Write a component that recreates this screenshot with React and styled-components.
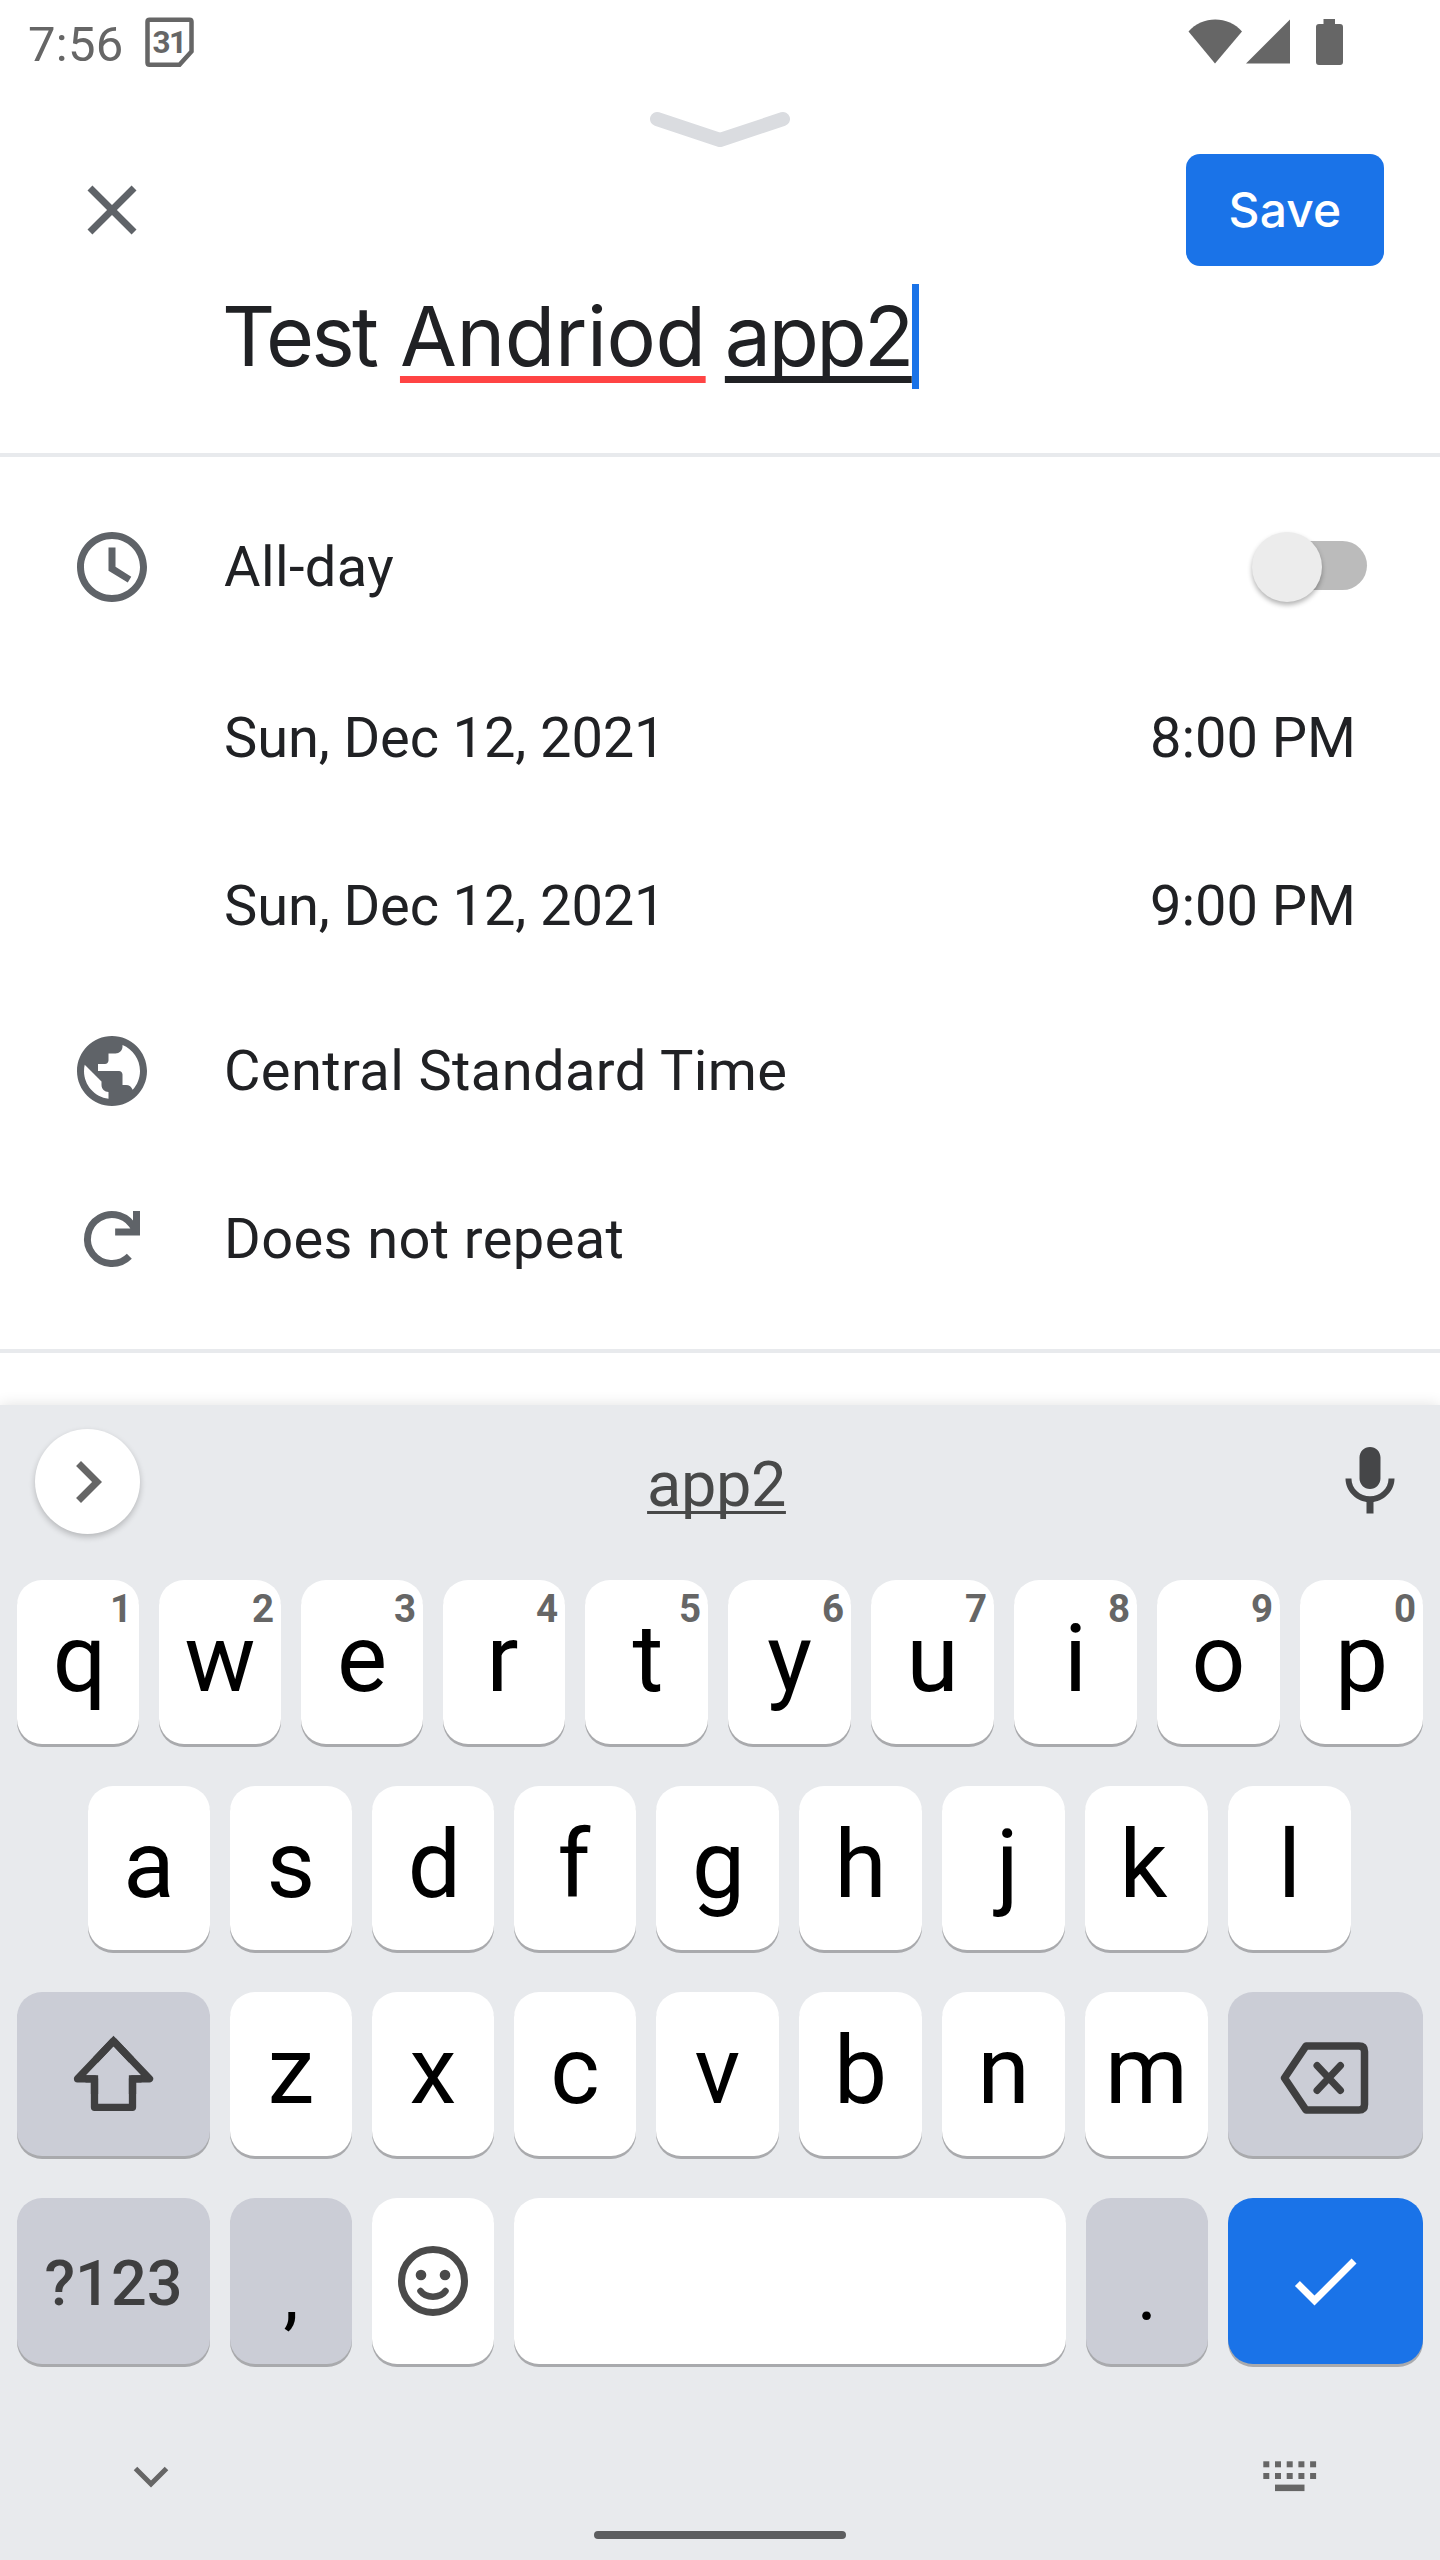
import React from "react";
import styled, { createGlobalStyle } from "styled-components";

const Global = createGlobalStyle`
  * { box-sizing: border-box; }
  body { margin: 0; background: #fff; }
  svg { display: block; flex: none; }
`;

const Screen = styled.main`
  width: 1440px;
  height: 2560px;
  display: flex;
  flex-direction: column;
  overflow: hidden;
  background: #fff;
  color: #202124;
  font-family: Roboto, "Liberation Sans", sans-serif;
`;

/* ---------- status bar ---------- */
const StatusBar = styled.header`
  height: 84px;
  display: flex;
  align-items: center;
  justify-content: space-between;
  padding: 0 97px 0 28px;
  color: #666;
`;
const StatusGroup = styled.div`
  display: flex;
  align-items: center;
  gap: ${(p) => p.$gap}px;
`;
const Clock = styled.span`
  font-size: 49px;
  line-height: 84px;
  padding-top: 5px;
  letter-spacing: 0.3px;
`;

/* ---------- event sheet header ---------- */
const SheetHeader = styled.section`
  height: 373px;
  display: flex;
  flex-direction: column;
  border-bottom: 4px solid #e8eaed;
`;
const Handle = styled.div`
  height: 70px;
  padding-top: 27px;
  display: flex;
  justify-content: center;
`;
const ActionBar = styled.div`
  height: 112px;
  display: flex;
  align-items: center;
  justify-content: space-between;
  padding: 0 56px 0 70px;
`;
const IconButton = styled.button`
  border: 0;
  padding: 0;
  background: none;
  color: ${(p) => p.$color || "#5f6368"};
`;
const SaveButton = styled.button`
  width: 198px;
  height: 112px;
  border: 0;
  border-radius: 14px;
  padding: 0;
  background: #1a73e8;
  color: #fff;
  font: 500 48px/112px Inter, Roboto, sans-serif;
  letter-spacing: 0.1px;
`;
const TitleField = styled.div`
  height: 105px;
  margin-top: 18px;
  padding-left: 222px;
  display: flex;
  font: 400 82.5px/105px Inter, Roboto, sans-serif;
  white-space: pre;
`;
const Word = styled.span`
  letter-spacing: ${(p) => p.$track || 0}px;
  text-decoration: ${(p) => (p.$line ? `underline ${p.$line}` : "none")};
  text-decoration-thickness: 7px;
  text-decoration-skip-ink: none;
  text-underline-offset: 10px;
`;
const Caret = styled.span`
  width: 7px;
  height: 105px;
  background: #1a73e8;
`;

/* ---------- event fields ---------- */
const Fields = styled.section`
  padding: 26px 0;
  border-bottom: 4px solid #e8eaed;
`;
const FieldRow = styled.div`
  height: ${(p) => p.$h || 168}px;
  display: flex;
  align-items: center;
  padding: 0 84px 0 70px;
  font-size: 56px;
  line-height: 66px;
`;
const FieldIcon = styled.span`
  width: 154px;
  flex: none;
  color: #5f6368;
`;
const FieldLabel = styled.span`
  flex: 1;
  letter-spacing: ${(p) => (p.$date ? -0.11 : 0.4)}px;
`;
const Switch = styled.span`
  width: 115px;
  height: 70px;
  margin-right: -11px;
  display: flex;
  align-items: center;
`;
const Thumb = styled.span`
  width: 70px;
  height: 70px;
  flex: none;
  border-radius: 50%;
  background: #ececec;
  box-shadow: 0 3px 5px rgba(0, 0, 0, 0.3);
  z-index: 1;
`;
const Track = styled.span`
  width: 101px;
  height: 49px;
  flex: none;
  margin: -3px 0 0 -56px;
  border-radius: 25px;
  background: #bbb;
`;
const Gap = styled.div`
  height: 52px;
`;

/* ---------- keyboard ---------- */
const Keyboard = styled.section`
  flex: 1;
  display: flex;
  flex-direction: column;
  background: #e8eaed;
  box-shadow: 0 0 14px rgba(0, 0, 0, 0.12);
`;
const SuggestionBar = styled.div`
  height: 153px;
  margin-bottom: 22px;
  display: flex;
  align-items: center;
  padding: 0 28px 0 35px;
`;
const Expand = styled.button`
  width: 105px;
  height: 105px;
  border: 0;
  border-radius: 50%;
  padding: 0 0 0 11px;
  background: #fff;
  color: #666;
  box-shadow: 0 3px 6px rgba(0, 0, 0, 0.22);
`;
const Suggestion = styled.span`
  flex: 1;
  padding: 6px 35px 0 0;
  text-align: center;
  font-size: 63px;
  letter-spacing: -0.4px;
  line-height: 74px;
  color: #484949;
  text-decoration: underline;
  text-decoration-thickness: 3px;
  text-decoration-skip-ink: none;
  text-underline-offset: 5px;
`;
const KeyRow = styled.div`
  height: 206px;
  display: flex;
  gap: 20px;
  padding-left: ${(p) => p.$inset || 17}px;
`;
const tones = {
  light: ["#fff", "#000"],
  dark: ["#cbcdd6", "#3f3f40"],
  punct: ["#cbcdd6", "#000"],
  blue: ["#1a73e8", "#fff"],
};
const KeyCap = styled.button`
  position: relative;
  width: ${(p) => p.$w}px;
  height: ${(p) => p.$h || 164}px;
  flex: none;
  border: 0;
  border-radius: 25px;
  padding: 0 ${(p) => Math.max(0, -(p.$nudge || 0)) * 2}px 0 ${(p) => Math.max(0, p.$nudge || 0) * 2}px;
  display: flex;
  justify-content: center;
  align-items: ${(p) => (p.$icon ? "center" : "flex-start")};
  background: ${(p) => tones[p.$tone || "light"][0]};
  color: ${(p) => tones[p.$tone || "light"][1]};
  box-shadow: 0 3px 0 #a9aaad;
  font-family: inherit;
  font-size: ${(p) => p.$size || 94.5}px;
  font-weight: ${(p) => p.$weight || 400};
  line-height: ${(p) => p.$line || 158}px;
`;
const Hint = styled.span`
  position: absolute;
  top: 6px;
  right: 7px;
  font-size: 38.5px;
  font-weight: 700;
  line-height: 45px;
  color: #666;
`;
const NavRow = styled.div`
  height: 31px;
  margin-top: 57px;
  display: flex;
  justify-content: space-between;
  align-items: flex-start;
  padding: 0 123px 0 133px;
  color: #666;
`;
const HomeBar = styled.div`
  width: 252px;
  height: 8px;
  margin: 39px auto 0;
  border-radius: 4px;
  background: #5c5d5f;
`;

const Icon = ({ d, size = 84 }) => (
  <svg width={size} height={size} viewBox="0 0 24 24" fill="currentColor">
    <path d={d} />
  </svg>
);

const CalendarIcon = () => (
  <svg width="49" height="50" viewBox="0 0 49 50" fill="none" stroke="currentColor">
    <path d="M4.500 2.700H44.500Q46.500 2.700 46.500 4.700V34.500L34.500 47.700H4.500Q2.500 47.700 2.500 45.700V4.700Q2.500 2.700 4.500 2.700Z" strokeWidth="4.500" />
    <text x="24" y="36" textAnchor="middle" fontFamily="Roboto, sans-serif" fontWeight="700" fontSize="31.5" letterSpacing="-1.500" fill="currentColor" stroke="none">31</text>
  </svg>
);

const RepeatIcon = () => (
  <svg width="84" height="84" viewBox="0 0 24 24" fill="none" stroke="currentColor" strokeWidth="2">
    <path d="M16.95 16.95A7 7 0 1 1 18.4 9.2" />
    <path d="M19 4V10H12.9" />
  </svg>
);

const ShiftIcon = () => (
  <svg width="84" height="80" viewBox="0.5 0 84 80" fill="none" stroke="currentColor" strokeWidth="7.3">
    <path d="M42 7L78 44.800H61V73.300H23V44.800H6L42 7" strokeLinejoin="round" />
    <path d="M24 26L42 7L60 26" />
    <path d="M70 44.800H61V60M14 44.800H23V60" />
  </svg>
);

const BackspaceIcon = () => (
  <svg width="92" height="82" viewBox="0 -8 92 82" fill="none" stroke="currentColor" strokeWidth="7.5" strokeLinejoin="round">
    <path d="M26 5H79Q84.500 5 84.500 10.500V63.500Q84.500 69 79 69H26L4.500 37Z" />
    <path d="M37 24.500L60.500 49.500M60.500 24.500L37 49.500" strokeLinecap="round" strokeWidth="7" />
  </svg>
);

const SmileIcon = () => (
  <svg width="70" height="70" viewBox="0 0 70 70" fill="none" stroke="#4a4a4a">
    <circle cx="35" cy="35" r="31.5" strokeWidth="7" />
    <circle cx="23" cy="29" r="5.3" fill="#4a4a4a" stroke="none" />
    <circle cx="47" cy="29" r="5.3" fill="#4a4a4a" stroke="none" />
    <path d="M22.500 45C28 52.500 42 52.500 47.500 45" strokeWidth="6.500" strokeLinecap="round" />
  </svg>
);

const KeyboardIcon = () => (
  <svg width="54" height="31" viewBox="0 0 54 31" fill="currentColor">
    {[0, 1, 2, 3, 4].map((i) => (
      <React.Fragment key={i}>
        <rect x={0.3 + i * 11.7} y="0.3" width="6" height="6" />
        <rect x={0.3 + i * 11.7} y="12" width="6" height="6" />
      </React.Fragment>
    ))}
    <rect x="12" y="23.600" width="29.500" height="6.500" />
  </svg>
);

const paths = {
  close: "M19 6.41L17.59 5 12 10.59 6.41 5 5 6.41 10.59 12 5 17.59 6.41 19 12 13.41 17.59 19 19 17.59 13.41 12z",
  clock: "M12 2C6.480 2 2 6.480 2 12s4.480 10 10 10 10-4.480 10-10S17.520 2 12 2zm0 18c-4.420 0-8-3.580-8-8s3.580-8 8-8 8 3.580 8 8-3.580 8-8 8zM11 6.400V13.100L16.500 16.400L17.500 14.750L13 11.950V6.400z",
  globe: "M12 2C6.48 2 2 6.48 2 12s4.48 10 10 10 10-4.48 10-10S17.52 2 12 2zm-1 17.93c-3.95-.49-7-3.85-7-7.93 0-.62.08-1.21.21-1.79L9 15v1c0 1.1.9 2 2 2v1.93zm6.9-2.54c-.26-.81-1-1.39-1.9-1.39h-1v-3c0-.55-.45-1-1-1H8v-2h2c.55 0 1-.45 1-1V7h2c1.1 0 2-.9 2-2v-.41c2.93 1.19 5 4.06 5 7.41 0 2.08-.8 3.97-2.1 5.39z",
  chevron: "M10 6L8.590 7.410 13.170 12l-4.580 4.590L10 18l6-6z",
  mic: "M12 14c1.66 0 2.99-1.34 2.99-3L15 5c0-1.66-1.34-3-3-3S9 3.34 9 5v6c0 1.66 1.34 3 3 3zm5.3-3c0 3-2.54 5.1-5.3 5.1S6.7 14 6.7 11H5c0 3.41 2.72 6.23 6 6.72V21h2v-3.28c3.28-.48 6-3.3 6-6.72h-1.7z",
  check: "M9 16.170L4.830 12l-1.420 1.410L9 19 21 7l-1.410-1.410z",
};

const row1 = "qwertyuiop".split("");
const row2 = "asdfghjkl".split("");
const row3 = "zxcvbnm".split("");

/* optical centring of single letters on their caps */
const nudge = { q: 1.5, r: -1.5, t: 1.5, f: -1, d: 1.5, g: 1, j: 4, k: -3 };

export default function App() {
  return (
    <Screen>
      <Global />
      <StatusBar>
        <StatusGroup $gap={21}>
          <Clock>7:56</Clock>
          <CalendarIcon />
        </StatusGroup>
        <svg width="155" height="46" viewBox="0 0 155 46" fill="currentColor">
          <path d="M0.500 12.500C14 -3.500 40.500 -3.500 54 12.500L27 44.500Z" />
          <path d="M102 0.500V44.500H58Z" />
          <path d="M135.500 0H147V5H152Q155 5 155 8V43Q155 46 152 46H131Q128 46 128 43V8Q128 5 131 5H135.500Z" />
        </svg>
      </StatusBar>

      <SheetHeader>
        <Handle>
          <svg width="142" height="38" viewBox="0 0 142 38" fill="none" stroke="#dadce0" strokeWidth="14" strokeLinecap="round" strokeLinejoin="round">
            <path d="M8 8L71 29L134 8" />
          </svg>
        </Handle>
        <ActionBar>
          <IconButton aria-label="Close"><Icon d={paths.close} /></IconButton>
          <SaveButton>Save</SaveButton>
        </ActionBar>
        <TitleField>
          <Word $track={-2.8}>Test</Word>
          <Word $track={0.5}> </Word>
          <Word $track={-0.4} $line="#ff4444">Andriod</Word>
          <Word $track={-4}> </Word>
          <Word $track={-2.7} $line="#202124">app2</Word>
          <Caret />
        </TitleField>
      </SheetHeader>

      <Fields>
        <FieldRow>
          <FieldIcon><Icon d={paths.clock} /></FieldIcon>
          <FieldLabel>All-day</FieldLabel>
          <Switch><Thumb /><Track /></Switch>
        </FieldRow>
        <FieldRow $h={173}>
          <FieldIcon />
          <FieldLabel $date>Sun, Dec 12, 2021</FieldLabel>
          <span>8:00 PM</span>
        </FieldRow>
        <FieldRow $h={163}>
          <FieldIcon />
          <FieldLabel $date>Sun, Dec 12, 2021</FieldLabel>
          <span>9:00 PM</span>
        </FieldRow>
        <FieldRow>
          <FieldIcon><Icon d={paths.globe} /></FieldIcon>
          <FieldLabel>Central Standard Time</FieldLabel>
        </FieldRow>
        <FieldRow>
          <FieldIcon><RepeatIcon /></FieldIcon>
          <FieldLabel>Does not repeat</FieldLabel>
        </FieldRow>
      </Fields>
      <Gap />

      <Keyboard>
        <SuggestionBar>
          <Expand aria-label="More"><Icon d={paths.chevron} /></Expand>
          <Suggestion>app2</Suggestion>
          <IconButton $color="#454648" aria-label="Voice"><Icon d={paths.mic} /></IconButton>
        </SuggestionBar>
        <KeyRow>
          {row1.map((k, i) => (
            <KeyCap key={k} $w={i < 4 ? 122 : 123} $nudge={nudge[k]}>
              {k}
              <Hint>{(i + 1) % 10}</Hint>
            </KeyCap>
          ))}
        </KeyRow>
        <KeyRow $inset={88}>
          {row2.map((k, i) => (
            <KeyCap key={k} $w={i < 4 ? 122 : 123} $nudge={nudge[k]}>{k}</KeyCap>
          ))}
        </KeyRow>
        <KeyRow>
          <KeyCap $w={193} $tone="dark" $icon aria-label="Shift"><ShiftIcon /></KeyCap>
          {row3.map((k, i) => (
            <KeyCap key={k} $w={i < 3 ? 122 : 123}>{k}</KeyCap>
          ))}
          <KeyCap $w={195} $tone="dark" $icon aria-label="Backspace"><BackspaceIcon /></KeyCap>
        </KeyRow>
        <KeyRow>
          <KeyCap $w={193} $h={166} $tone="dark" $size={63} $weight={500} $line={171}>?123</KeyCap>
          <KeyCap $w={122} $h={166} $tone="punct" $size={77} $line={193}>,</KeyCap>
          <KeyCap $w={122} $h={166} $icon aria-label="Emoji"><SmileIcon /></KeyCap>
          <KeyCap $w={552} $h={166} aria-label="Space" />
          <KeyCap $w={122} $h={166} $tone="punct" $size={77} $line={193}>.</KeyCap>
          <KeyCap $w={195} $h={166} $tone="blue" $icon $nudge={-1} aria-label="Done"><Icon d={paths.check} /></KeyCap>
        </KeyRow>
        <NavRow>
          <svg width="37" height="31" viewBox="0 0 37 31" fill="none" stroke="currentColor" strokeWidth="5">
            <path d="M2.500 7.500L18 23L33.500 7.500" />
          </svg>
          <KeyboardIcon />
        </NavRow>
        <HomeBar />
      </Keyboard>
    </Screen>
  );
}
